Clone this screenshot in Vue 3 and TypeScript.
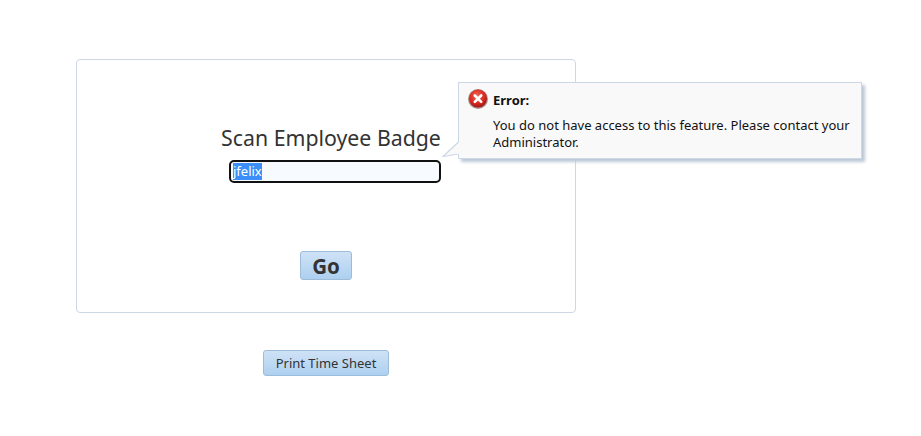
<script setup lang="ts">
const badge = 'jfelix'
</script>

<template>
  <main class="page">
    <section class="card">
      <h1 class="title">Scan Employee Badge</h1>
      <div class="field"><span class="sel">{{ badge }}</span></div>
      <button class="btn go">Go</button>
      <div class="popup">
        <svg class="tail" width="20" height="20" viewBox="0 0 20 20">
          <path d="M16.5 1 L1 15.5 L16.5 13" fill="#f9f9f9" stroke="#cdd8e6" stroke-width="1.2" />
          <path d="M17 1.5 L17 12.5 L15 13.5 L15 3.5 Z" fill="#f9f9f9" />
        </svg>
        <div class="head">
          <svg class="icon" width="20" height="20" viewBox="0 0 20 20">
            <defs>
              <radialGradient id="red" cx="45%" cy="35%" r="70%">
                <stop offset="0" stop-color="#f0695a" />
                <stop offset="0.6" stop-color="#d8291f" />
                <stop offset="1" stop-color="#8e1410" />
              </radialGradient>
            </defs>
            <circle cx="10" cy="10" r="10" fill="#6b3a38" opacity="0.55" />
            <circle cx="10" cy="9.6" r="9" fill="url(#red)" />
            <path d="M6.8 6.5 L13.2 12.9 M13.2 6.5 L6.8 12.9" stroke="#fff" stroke-width="2.6" stroke-linecap="round" />
          </svg>
          <strong class="label">Error:</strong>
        </div>
        <p class="msg">You do not have access to this feature. Please contact your Administrator.</p>
      </div>
    </section>
    <button class="btn print">Print Time Sheet</button>
  </main>
</template>

<style scoped>
.page {
  width: 500px;
  margin-left: 76px;
  padding-top: 59px;
  display: flex;
  flex-direction: column;
  align-items: center;
  font-family: "Noto Sans", "Open Sans", sans-serif;
  color: #333;
}
.card {
  position: relative;
  box-sizing: border-box;
  width: 500px;
  height: 254px;
  border: 1px solid #cdd8e6;
  border-radius: 4px;
  display: flex;
  flex-direction: column;
  align-items: center;
  padding-top: 63px;
}
.title {
  margin: 0 0 8px 10px;
  font-size: 21.3px;
  line-height: 29px;
  font-weight: 400;
  white-space: nowrap;
}
.field {
  box-sizing: border-box;
  width: 212px;
  height: 23px;
  margin-left: 18px;
  border: 2px solid #111;
  border-radius: 5px;
  background: #f7fbff;
  padding: 1px 2px;
  font-size: 13px;
  line-height: 17px;
}
.sel {
  display: inline-block;
  background: #3b8ff6;
  color: #fff;
}
.btn {
  box-sizing: border-box;
  border: 1px solid #9dbcd9;
  border-radius: 3px;
  background: linear-gradient(#cfe2f6, #add0f0);
  color: #333;
  font-family: inherit;
  padding: 0;
}
.go {
  width: 52px;
  height: 29px;
  margin-top: 68px;
  font-size: 20.5px;
  font-weight: 700;
}
.print {
  width: 126px;
  height: 26px;
  margin-top: 37px;
  font-size: 13px;
}
.popup {
  position: absolute;
  left: 381px;
  top: 22px;
  box-sizing: border-box;
  width: 404px;
  height: 77px;
  background: #f9f9f9;
  border: 1px solid #cdd8e6;
  box-shadow: 3px 3px 3px #bcc8d8;
  padding: 6px 8px 6px 9px;
  color: #111;
  font-size: 13px;
  line-height: 17px;
}
.tail {
  position: absolute;
  left: -17px;
  top: 58px;
}
.head {
  display: flex;
  align-items: center;
  gap: 5px;
  height: 20px;
}
.icon {
  flex: none;
}
.label {
  padding-top: 3px;
}
.msg {
  margin: 8px 0 0 25px;
}
</style>
